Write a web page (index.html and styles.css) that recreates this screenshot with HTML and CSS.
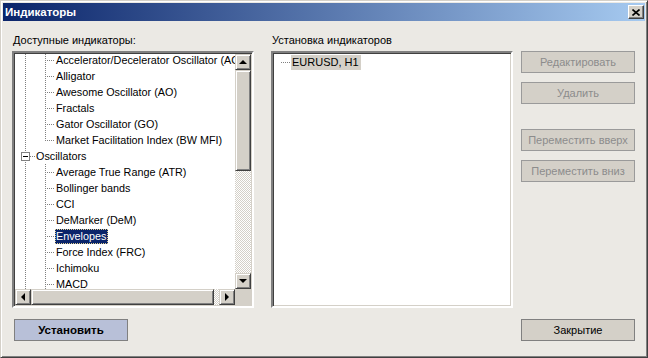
FILE: index.html
```html
<!DOCTYPE html>
<html lang="ru">
<head>
    <meta charset="UTF-8">
    <title>Индикаторы</title>
    <link rel="stylesheet" href="styles.css">
</head>
<body>
    <div class="window">
        <div class="titlebar">
            <span class="title">Индикаторы</span>
            <span class="close">
                <svg width="8" height="7" viewBox="0 0 8 7"><path d="M0.5 0.5 L7.5 6.5 M7.5 0.5 L0.5 6.5" stroke="#000" stroke-width="1.6" fill="none"/></svg>
            </span>
        </div>
        <div class="body">
            <div class="panes">
                <div class="col col-left">
                    <div class="label">Доступные индикаторы:</div>
                    <div class="treebox">
                        <div class="tree">
                            <div class="row"><span class="g v"></span><span class="g vh"></span><span class="item">Accelerator/Decelerator Oscillator (AC)</span></div>
                            <div class="row"><span class="g v"></span><span class="g vh"></span><span class="item">Alligator</span></div>
                            <div class="row"><span class="g v"></span><span class="g vh"></span><span class="item">Awesome Oscillator (AO)</span></div>
                            <div class="row"><span class="g v"></span><span class="g vh"></span><span class="item">Fractals</span></div>
                            <div class="row"><span class="g v"></span><span class="g vh"></span><span class="item">Gator Oscillator (GO)</span></div>
                            <div class="row"><span class="g v"></span><span class="g lh"></span><span class="item">Market Facilitation Index (BW MFI)</span></div>
                            <div class="row"><span class="g node"><span class="minus"></span></span><span class="item">Oscillators</span></div>
                            <div class="row"><span class="g v"></span><span class="g vh"></span><span class="item">Average True Range (ATR)</span></div>
                            <div class="row"><span class="g v"></span><span class="g vh"></span><span class="item">Bollinger bands</span></div>
                            <div class="row"><span class="g v"></span><span class="g vh"></span><span class="item">CCI</span></div>
                            <div class="row"><span class="g v"></span><span class="g vh"></span><span class="item">DeMarker (DeM)</span></div>
                            <div class="row"><span class="g v"></span><span class="g vh"></span><span class="item selected">Envelopes</span></div>
                            <div class="row"><span class="g v"></span><span class="g vh"></span><span class="item">Force Index (FRC)</span></div>
                            <div class="row"><span class="g v"></span><span class="g vh"></span><span class="item">Ichimoku</span></div>
                            <div class="row"><span class="g v"></span><span class="g vh"></span><span class="item">MACD</span></div>
                        </div>
                        <div class="vscroll">
                            <span class="sbtn"><span class="arrow up"></span></span>
                            <span class="thumb vthumb"></span>
                            <span class="track"></span>
                            <span class="sbtn"><span class="arrow down"></span></span>
                        </div>
                        <div class="hscroll">
                            <span class="sbtn"><span class="arrow left"></span></span>
                            <span class="thumb hthumb"></span>
                            <span class="track"></span>
                            <span class="sbtn"><span class="arrow right"></span></span>
                        </div>
                        <div class="corner"></div>
                    </div>
                </div>
                <div class="col col-mid">
                    <div class="label">Установка индикаторов</div>
                    <div class="listbox">
                        <div class="row chart-row"><span class="g h"></span><span class="item inactive">EURUSD, H1</span></div>
                    </div>
                </div>
                <div class="side">
                    <button class="btn disabled">Редактировать</button>
                    <button class="btn disabled">Удалить</button>
                    <button class="btn disabled spaced">Переместить вверх</button>
                    <button class="btn disabled">Переместить вниз</button>
                </div>
            </div>
            <div class="footer">
                <button class="btn primary">Установить</button>
                <button class="btn">Закрытие</button>
            </div>
        </div>
    </div>
</body>
</html>
```

FILE: styles.css
```css
* { box-sizing: border-box; }
body { margin: 0; font-family: "Liberation Sans", Arial, sans-serif; font-size: 11px; color: #000; background: #fff; }

.window { width: 648px; height: 358px; display: flex; flex-direction: column; padding: 2px; border: 1px solid; border-color: #d4d0c8 #404040 #404040 #d4d0c8; box-shadow: inset 1px 1px #fff, inset -1px -1px #808080; background: #ebe9e4; }

.titlebar { height: 18px; display: flex; align-items: center; justify-content: space-between; padding: 0 1px 0 2px; background: linear-gradient(to right, #0a246a, #a6caf0); }
.title { color: #fff; font-weight: bold; font-size: 11.5px; }
.close { width: 16px; height: 14px; display: flex; align-items: center; justify-content: center; background: #d4d0c8; border: 1px solid; border-color: #fff #404040 #404040 #fff; box-shadow: inset -1px -1px #808080; }

.body { flex: 1; display: flex; flex-direction: column; padding: 10px 10px 14px 9px; }
.panes { display: flex; }
.col { display: flex; flex-direction: column; width: 242px; }
.col-left { margin-right: 17px; }
.col-mid { margin-right: 8px; }
.label { height: 20px; padding: 2px 0 0 1px; line-height: 14px; }

.treebox, .listbox { height: 257px; border: 2px solid; border-color: #808080 #fff #fff #808080; box-shadow: inset 1px 1px #404040, inset -1px -1px #d4d0c8; background: #fff; }
.treebox { display: grid; grid-template-columns: 1fr 16px; grid-template-rows: 1fr 16px; padding: 1px; }
.tree { overflow: hidden; white-space: nowrap; font-size: 10.8px; padding-top: 0; }
.tree .row:first-child { margin-top: -2px; }
.listbox { padding: 1px 3px; }

.row { display: flex; height: 16px; align-items: center; flex: none; }
.g { width: 20px; height: 16px; flex: none; }
.v { background: repeating-linear-gradient(to bottom, #808080 0 1px, transparent 1px 2px) 10px 0 / 1px 16px no-repeat; }
.vh { background: repeating-linear-gradient(to bottom, #808080 0 1px, transparent 1px 2px) 10px 0 / 1px 16px no-repeat, repeating-linear-gradient(to right, #808080 0 1px, transparent 1px 2px) 10px 8px / 10px 1px no-repeat; }
.lh { background: repeating-linear-gradient(to bottom, #808080 0 1px, transparent 1px 2px) 10px 0 / 1px 9px no-repeat, repeating-linear-gradient(to right, #808080 0 1px, transparent 1px 2px) 10px 8px / 10px 1px no-repeat; }
.node { display: flex; align-items: center; padding-left: 6px; background: repeating-linear-gradient(to bottom, #808080 0 1px, transparent 1px 2px) 10px 0 / 1px 16px no-repeat, repeating-linear-gradient(to right, #808080 0 1px, transparent 1px 2px) 15px 8px / 5px 1px no-repeat; }
.minus { width: 9px; height: 9px; border: 1px solid #808080; background: linear-gradient(#000, #000) center / 5px 1px no-repeat, #fff; }
.h { width: 10px; margin-left: 5px; background: repeating-linear-gradient(to right, #808080 0 1px, transparent 1px 2px) 0 8px / 10px 1px no-repeat; }

.item { padding: 0 2px 0 1px; line-height: 15px; height: 15px; }
.selected { background: #0a246a; color: #fff; outline: 1px dotted #e0d090; outline-offset: -1px; }
.inactive { background: #d4d0c8; }

.vscroll { display: flex; flex-direction: column; }
.hscroll { display: flex; }
.corner { background: #d4d0c8; }
.sbtn { width: 16px; height: 16px; flex: none; display: flex; align-items: center; justify-content: center; background: #d4d0c8; border: 1px solid; border-color: #d4d0c8 #404040 #404040 #d4d0c8; box-shadow: inset 1px 1px #fff, inset -1px -1px #808080; }
.thumb { flex: none; background: #d4d0c8; border: 1px solid; border-color: #d4d0c8 #404040 #404040 #d4d0c8; box-shadow: inset 1px 1px #fff, inset -1px -1px #808080; }
.vthumb { height: 101px; }
.hthumb { width: 183px; }
.track { flex: 1; background: repeating-conic-gradient(#fff 0 25%, #d4d0c8 0 50%) 0 0 / 2px 2px; }
.arrow { width: 0; height: 0; border: 0 solid transparent; }
.up { border-width: 0 4px 4px; border-bottom-color: #000; }
.down { border-width: 4px 4px 0; border-top-color: #000; }
.left { border-width: 4px 4px 4px 0; border-right-color: #000; }
.right { border-width: 4px 0 4px 4px; border-left-color: #000; }

.side { width: 114px; padding-top: 20px; display: flex; flex-direction: column; }
.btn { width: 114px; height: 22px; margin-bottom: 9px; font-family: "Liberation Sans", Arial, sans-serif; font-size: 11px; color: #000; background: #d4d0c8; border: 1px solid #808080; padding: 0; }
.btn.disabled { color: #8c8c8c; border-color: #9a9a9a; }
.btn.spaced { margin-top: 16px; }

.footer { margin-top: 11px; display: flex; justify-content: space-between; padding-left: 2px; }
.footer .btn { margin-bottom: 0; }
.btn.primary { background: #b8c0d8; font-weight: bold; font-size: 11.5px; }
```
